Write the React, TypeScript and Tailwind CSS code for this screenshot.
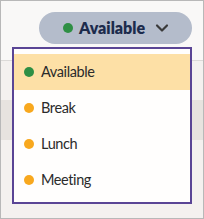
import React from "react";

const items = [
  { label: "Available", color: "bg-[#2e8f44]", active: true },
  { label: "Break", color: "bg-[#f8a81e]", active: false },
  { label: "Lunch", color: "bg-[#f8a81e]", active: false },
  { label: "Meeting", color: "bg-[#f8a81e]", active: false },
];

export default function App() {
  return (
    <div
      className="relative w-[204px] h-[219px] overflow-hidden border border-[#b8b8b8] bg-[#f4f1ef]"
      style={{ fontFamily: "Lato, 'Noto Sans', sans-serif" }}
    >
      <div className="h-[60px] bg-[#f9f8f7] border-b border-[#dcdad8] flex justify-end items-start pt-[11px] pr-[11px]">
        <button className="h-[32px] w-[153px] rounded-full bg-[#b4bccb] flex items-center pl-[24px]">
          <span className="w-[10px] h-[10px] rounded-full bg-[#2e8f44]" />
          <span className="ml-[6px] text-[16px] font-extrabold text-[#1c2b4c] leading-none">
            Available
          </span>
          <svg
            width="20"
            height="20"
            viewBox="0 0 24 24"
            fill="none"
            stroke="#3a3a3a"
            strokeWidth="2.6"
            strokeLinecap="round"
            strokeLinejoin="round"
            className="ml-[7px]"
          >
            <path d="m6 9 6 6 6-6" />
          </svg>
        </button>
      </div>
      <div className="h-[39px]" />
      <div className="h-[40px] bg-[#e7e3df]" />

      <div className="absolute left-[11px] top-[46px] w-[180px] h-[157px] border-2 border-[#5a4595] bg-[#fffefd] py-[5px]">
        {items.map((it) => (
          <div
            key={it.label}
            className={`h-[36px] flex items-center pl-[10px] ${it.active ? "bg-[#fde0a6]" : ""}`}
          >
            <span className={`w-[10px] h-[10px] rounded-full ${it.color}`} />
            <span className="ml-[7px] text-[14.5px] text-[#2b2b2b] tracking-[-0.4px] leading-none">
              {it.label}
            </span>
          </div>
        ))}
      </div>
    </div>
  );
}
